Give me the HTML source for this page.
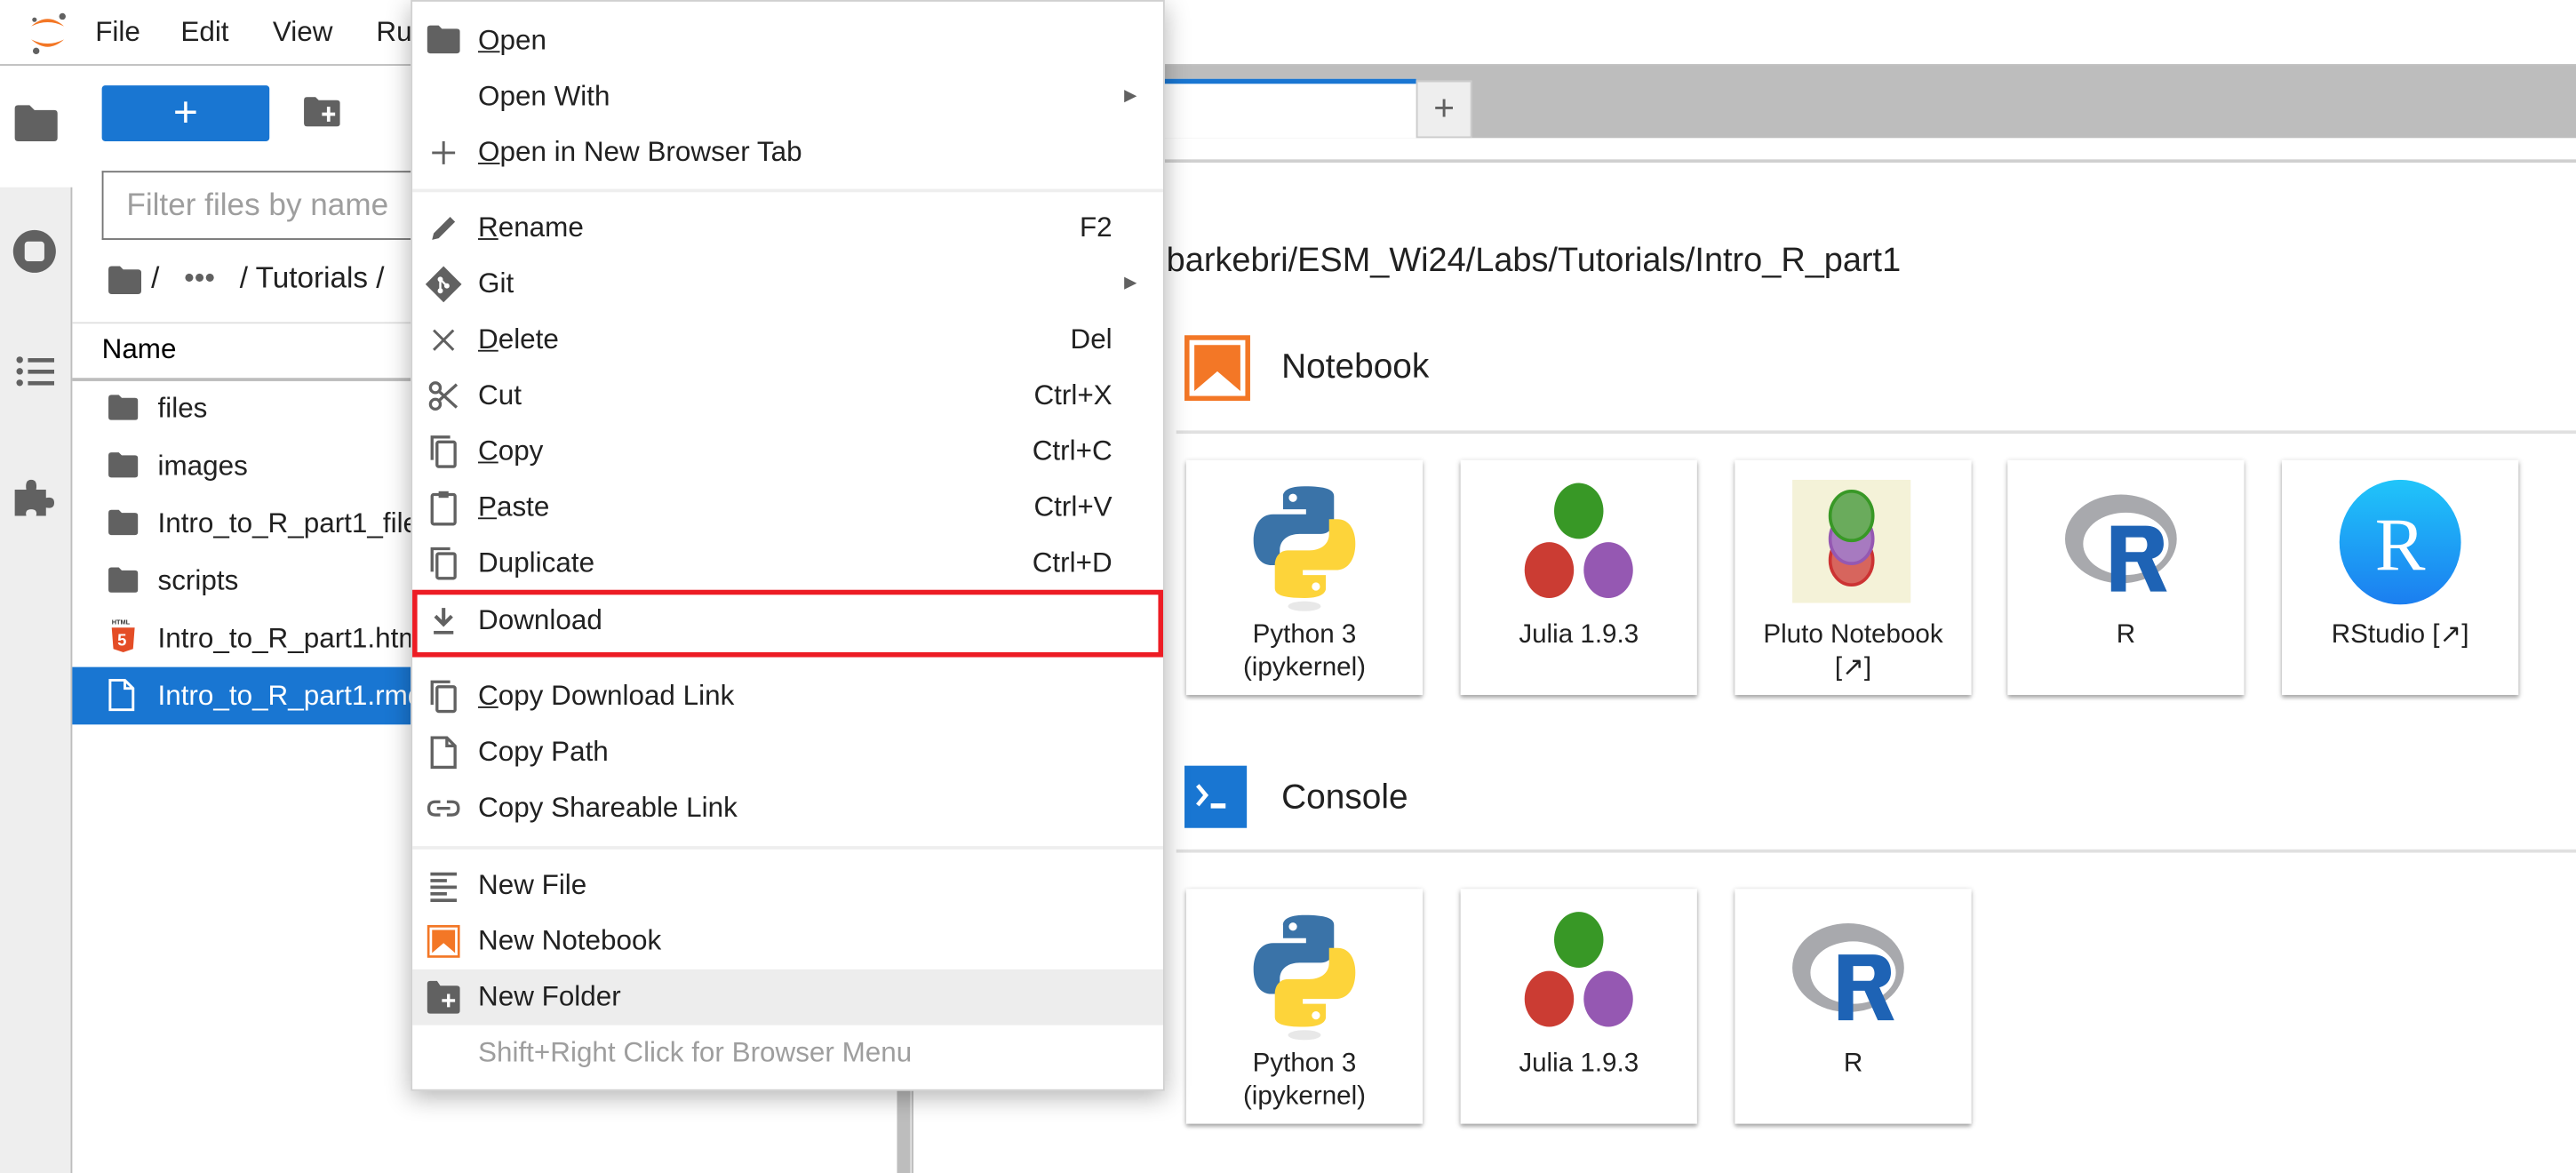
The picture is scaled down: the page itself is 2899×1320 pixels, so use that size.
<!DOCTYPE html>
<html><head><meta charset="utf-8">
<style>
*{margin:0;padding:0;box-sizing:border-box}
html,body{width:2899px;height:1319px;overflow:hidden;background:#fff}
#root{position:absolute;left:0;top:0;width:1568px;height:714px;transform:scale(1.84885);transform-origin:0 0;font-family:"Liberation Sans",sans-serif;color:#212121;font-size:17px}
.a{position:absolute}
.mi{position:absolute;left:250px;width:458px;height:34px;line-height:34px}
.mi .t{position:absolute;left:41px;top:0;white-space:nowrap}
.mi .k{position:absolute;right:31px;top:0}
.mi svg{position:absolute;left:10px;top:7px}
.fr{position:absolute;left:44px;width:510px;height:35px;line-height:35px;font-size:17px}
.fr .t{position:absolute;left:52px}
.fr svg{position:absolute;left:22px;top:9px}
.card{position:absolute;width:144px;height:143px;background:#fff;box-shadow:0 1px 3px rgba(0,0,0,.3),0 2px 2px rgba(0,0,0,.15);text-align:center;font-size:16px;line-height:20px}
.card .l{position:absolute;left:0;right:0;top:97px}
.card svg{position:absolute;left:34px;top:12px}
</style></head><body><div id="root">
<!-- top bar -->
<div class="a" style="left:0;top:0;width:1568px;height:40px;border-bottom:1px solid #bdbdbd;background:#fff"></div>
<svg class="a" style="left:14px;top:5px" width="30" height="30" viewBox="0 0 30 30"><path d="M5 11 Q15 2 25 11 Q15 6 5 11Z" fill="#f37726"/><path d="M5 19 Q15 28 25 19 Q15 24 5 19Z" fill="#f37726"/><circle cx="24" cy="5" r="2" fill="#616161"/><circle cx="7" cy="7" r="1.4" fill="#616161"/><circle cx="8" cy="26" r="2" fill="#616161"/></svg>
<div class="a" style="left:58px;top:10px;font-size:17px">File</div>
<div class="a" style="left:110px;top:10px;font-size:17px">Edit</div>
<div class="a" style="left:166px;top:10px;font-size:17px">View</div>
<div class="a" style="left:229px;top:10px;font-size:17px">Ru</div>
<!-- left sidebar -->
<div class="a" style="left:0;top:114px;width:44px;height:600px;background:#eeeeee;border-right:1px solid #bdbdbd"></div>
<svg class="a" style="left:8px;top:62px" width="28" height="26" viewBox="0 0 28 26"><path d="M1 4 Q1 2 3 2 L10 2 L13 5 L25 5 Q27 5 27 7 L27 22 Q27 24 25 24 L3 24 Q1 24 1 22Z" fill="#616161"/></svg>
<svg class="a" style="left:7px;top:139px" width="28" height="28" viewBox="0 0 28 28"><circle cx="14" cy="14" r="13" fill="#616161"/><rect x="8" y="8" width="12" height="12" rx="2" fill="#eee"/></svg>
<svg class="a" style="left:8px;top:214px" width="28" height="24" viewBox="0 0 28 24"><g fill="#616161"><circle cx="4" cy="5" r="2"/><circle cx="4" cy="12" r="2"/><circle cx="4" cy="19" r="2"/><rect x="9" y="4" width="16" height="2.5"/><rect x="9" y="11" width="16" height="2.5"/><rect x="9" y="18" width="16" height="2.5"/></g></svg>
<svg class="a" style="left:7px;top:290px" width="26" height="26" viewBox="0 0 26 26"><path d="M2 8 L9 8 Q8 2 12 2 Q16 2 15 8 L21 8 L21 13 Q26 12 26 16 Q26 20 21 19 L21 24 L15 24 Q16 20 12 20 Q8 20 9 24 L2 24Z" fill="#616161"/></svg>
<!-- file browser -->
<div class="a" style="left:62px;top:52px;width:102px;height:34px;background:#1976d2;border-radius:2px;color:#fff;text-align:center;font-size:26px;line-height:32px">+</div>
<svg class="a" style="left:185px;top:59px" width="22" height="18" viewBox="0 0 22 18"><path d="M0 2 Q0 0 2 0 L7 0 L9 2 L20 2 Q22 2 22 4 L22 16 Q22 18 20 18 L2 18 Q0 18 0 16Z" fill="#616161"/><path d="M15 6 V15 M11 10.5 H19" stroke="#fff" stroke-width="2"/></svg>
<div class="a" style="left:62px;top:104px;width:200px;height:42px;border:1px solid #757575;border-right:none;font-size:19px;color:#9e9e9e;padding:10px 0 0 14px;white-space:nowrap">Filter files by name</div>
<svg class="a" style="left:66px;top:162px" width="20" height="17" viewBox="0 0 20 17"><path d="M0 2 Q0 0 2 0 L7 0 L9 2 L18 2 Q20 2 20 4 L20 15 Q20 17 18 17 L2 17 Q0 17 0 15Z" fill="#616161"/></svg>
<div class="a" style="left:92px;top:159px;font-size:18px;white-space:nowrap">/ &nbsp; <span style="color:#616161">•••</span> &nbsp; / Tutorials / </div>
<div class="a" style="left:44px;top:196px;width:510px;height:1px;background:#e0e0e0"></div>
<div class="a" style="left:62px;top:203px;font-size:17px;color:#000">Name</div>
<div class="a" style="left:44px;top:230px;width:510px;height:2px;background:#bdbdbd"></div>
<div class="fr" style="top:231px"><svg width="18" height="16" viewBox="0 0 20 17"><path d="M0 2 Q0 0 2 0 L7 0 L9 2 L18 2 Q20 2 20 4 L20 15 Q20 17 18 17 L2 17 Q0 17 0 15Z" fill="#616161"/></svg><span class="t">files</span></div>
<div class="fr" style="top:266px"><svg width="18" height="16" viewBox="0 0 20 17"><path d="M0 2 Q0 0 2 0 L7 0 L9 2 L18 2 Q20 2 20 4 L20 15 Q20 17 18 17 L2 17 Q0 17 0 15Z" fill="#616161"/></svg><span class="t">images</span></div>
<div class="fr" style="top:301px"><svg width="18" height="16" viewBox="0 0 20 17"><path d="M0 2 Q0 0 2 0 L7 0 L9 2 L18 2 Q20 2 20 4 L20 15 Q20 17 18 17 L2 17 Q0 17 0 15Z" fill="#616161"/></svg><span class="t">Intro_to_R_part1_files</span></div>
<div class="fr" style="top:336px"><svg width="18" height="16" viewBox="0 0 20 17"><path d="M0 2 Q0 0 2 0 L7 0 L9 2 L18 2 Q20 2 20 4 L20 15 Q20 17 18 17 L2 17 Q0 17 0 15Z" fill="#616161"/></svg><span class="t">scripts</span></div>
<div class="fr" style="top:371px"><svg width="18" height="22" viewBox="0 0 18 22" style="top:5px"><text x="2" y="4" font-size="4" font-family="Liberation Sans" font-weight="bold" fill="#333">HTML</text><path d="M2 6 L16 6 L15 19 L9 21 L3 19Z" fill="#e44d26"/><text x="5.5" y="17" font-size="10" font-weight="bold" font-family="Liberation Sans" fill="#fff">5</text></svg><span class="t">Intro_to_R_part1.html</span></div>
<div class="fr" style="top:406px;background:#1976d2;color:#fff"><svg width="16" height="20" viewBox="0 0 16 20" style="top:7px"><path d="M1 1 H10 L15 6 V19 H1Z M10 1 V6 H15" fill="none" stroke="#fff" stroke-width="1.6"/></svg><span class="t">Intro_to_R_part1.rmd</span></div>
<div class="a" style="left:546px;top:663px;width:10px;height:51px;background:#bdbdbd"></div>
<!-- main area -->
<div class="a" style="left:554px;top:40px;width:1px;height:674px;background:#e0e0e0"></div>
<div class="a" style="left:555px;top:40px;width:1013px;height:44px;background:#bdbdbd"></div>
<div class="a" style="left:555px;top:48px;width:307px;height:36px;background:#fff;border-top:3px solid #1976d2"></div>
<div class="a" style="left:862px;top:49px;width:34px;height:35px;background:#eee;border:1px solid #ccc;text-align:center;font-size:22px;line-height:32px;color:#616161">+</div>
<div class="a" style="left:555px;top:97px;width:1013px;height:2px;background:#d0d0d0"></div>
<div class="a" style="left:710px;top:147px;font-size:20.5px;white-space:nowrap">barkebri/ESM_Wi24/Labs/Tutorials/Intro_R_part1</div>
<svg class="a" style="left:721px;top:204px" width="40" height="40" viewBox="0 0 40 40"><rect x="1.5" y="1.5" width="37" height="37" fill="#fff" stroke="#f37726" stroke-width="3"/><path d="M6 6 H34 V34 L20 22 L6 34Z" fill="#f37726"/></svg>
<div class="a" style="left:780px;top:212px;font-size:21px">Notebook</div>
<div class="a" style="left:716px;top:262px;width:852px;height:2px;background:#e0e0e0"></div>
<svg class="a" style="left:721px;top:466px" width="38" height="38" viewBox="0 0 38 38"><rect width="38" height="38" fill="#1976d2"/><path d="M8 12 L13 18 L8 24" fill="none" stroke="#fff" stroke-width="2.5"/><rect x="16" y="23" width="9" height="3" fill="#fff"/></svg>
<div class="a" style="left:780px;top:474px;font-size:21px">Console</div>
<div class="a" style="left:716px;top:517px;width:852px;height:2px;background:#e0e0e0"></div>

<!-- cards row 1 -->
<div class="card" style="left:722px;top:280px"><svg width="76" height="80" viewBox="0 0 76 80"><ellipse cx="38" cy="77" rx="10" ry="3" fill="#e8e8e8"/><path d="M38 4 C24 4 25 10 25 10 V18 H39 V21 H19 C11 21 7 28 7 37 C7 46 11 52 18 52 H23 V43 C23 36 29 33 35 33 H48 C53 33 56 29 56 24 V10 C56 6 51 4 38 4Z" fill="#3a73a8"/><circle cx="31" cy="11" r="2.5" fill="#fff"/><path d="M38 72 C52 72 51 66 51 66 V58 H37 V55 H57 C65 55 69 48 69 39 C69 30 65 24 58 24 H53 V33 C53 40 47 43 41 43 H28 C23 43 20 47 20 52 V66 C20 70 25 72 38 72Z" fill="#fdd43a"/><circle cx="45" cy="65" r="2.5" fill="#fff"/></svg><div class="l">Python 3<br>(ipykernel)</div></div>
<div class="card" style="left:889px;top:280px"><svg width="76" height="80" viewBox="0 0 76 80"><ellipse cx="38" cy="19" rx="15" ry="17" fill="#389826"/><ellipse cx="20" cy="55" rx="15" ry="17" fill="#cb3c33"/><ellipse cx="56" cy="55" rx="15" ry="17" fill="#9558b2"/></svg><div class="l">Julia 1.9.3</div></div>
<div class="card" style="left:1056px;top:280px"><svg width="76" height="76" viewBox="0 0 76 76"><rect x="1" y="0" width="72" height="75" fill="#f4f2d8"/><ellipse cx="37" cy="49" rx="13" ry="15" fill="#d7655d" stroke="#c33" stroke-width="2"/><ellipse cx="37" cy="36" rx="13" ry="15" fill="#a77ac0" stroke="#9558b2" stroke-width="2"/><ellipse cx="37" cy="22" rx="13" ry="15" fill="#6aab5c" stroke="#389826" stroke-width="2"/></svg><div class="l">Pluto Notebook<br>[↗]</div></div>
<div class="card" style="left:1222px;top:280px"><svg width="76" height="76" viewBox="0 0 76 76"><ellipse cx="35" cy="36" rx="34" ry="27" fill="#a8a9ad"/><ellipse cx="38" cy="39" rx="26" ry="19" fill="#fff"/><path d="M29 28 H50 C59 28 61 34 61 39 C61 44 58 47 54 48 L63 68 H53 L45 50 H38 V68 H29Z M38 35 V44 H48 C52 44 52 35 48 35Z" fill="#1e63b5"/></svg><div class="l">R</div></div>
<div class="card" style="left:1389px;top:280px"><svg width="76" height="76" viewBox="0 0 76 76"><defs><linearGradient id="g" x1="0" y1="0" x2="0" y2="1"><stop offset="0" stop-color="#20c5fa"/><stop offset="1" stop-color="#1b7ef0"/></linearGradient></defs><ellipse cx="38" cy="38" rx="37" ry="38" fill="url(#g)"/><text x="38" y="55" font-family="Liberation Serif" font-size="46" fill="#fff" text-anchor="middle">R</text></svg><div class="l">RStudio [↗]</div></div>
<!-- cards row 2 -->
<div class="card" style="left:722px;top:541px"><svg width="76" height="80" viewBox="0 0 76 80"><ellipse cx="38" cy="77" rx="10" ry="3" fill="#e8e8e8"/><path d="M38 4 C24 4 25 10 25 10 V18 H39 V21 H19 C11 21 7 28 7 37 C7 46 11 52 18 52 H23 V43 C23 36 29 33 35 33 H48 C53 33 56 29 56 24 V10 C56 6 51 4 38 4Z" fill="#3a73a8"/><circle cx="31" cy="11" r="2.5" fill="#fff"/><path d="M38 72 C52 72 51 66 51 66 V58 H37 V55 H57 C65 55 69 48 69 39 C69 30 65 24 58 24 H53 V33 C53 40 47 43 41 43 H28 C23 43 20 47 20 52 V66 C20 70 25 72 38 72Z" fill="#fdd43a"/><circle cx="45" cy="65" r="2.5" fill="#fff"/></svg><div class="l">Python 3<br>(ipykernel)</div></div>
<div class="card" style="left:889px;top:541px"><svg width="76" height="80" viewBox="0 0 76 80"><ellipse cx="38" cy="19" rx="15" ry="17" fill="#389826"/><ellipse cx="20" cy="55" rx="15" ry="17" fill="#cb3c33"/><ellipse cx="56" cy="55" rx="15" ry="17" fill="#9558b2"/></svg><div class="l">Julia 1.9.3</div></div>
<div class="card" style="left:1056px;top:541px"><svg width="76" height="76" viewBox="0 0 76 76"><ellipse cx="35" cy="36" rx="34" ry="27" fill="#a8a9ad"/><ellipse cx="38" cy="39" rx="26" ry="19" fill="#fff"/><path d="M29 28 H50 C59 28 61 34 61 39 C61 44 58 47 54 48 L63 68 H53 L45 50 H38 V68 H29Z M38 35 V44 H48 C52 44 52 35 48 35Z" fill="#1e63b5"/></svg><div class="l">R</div></div>

<!-- context menu -->
<div class="a" style="left:250px;top:0;width:459px;height:664px;background:#fff;border:1px solid #d0d0d0;box-shadow:0 4px 14px rgba(0,0,0,.3)"></div>
<div class="a" style="left:251px;top:115px;width:457px;height:2px;background:#eee"></div>
<div class="a" style="left:251px;top:515px;width:457px;height:2px;background:#eee"></div>
<div class="a" style="left:251px;top:590px;width:457px;height:34px;background:#ededed"></div>
<div class="a" style="left:251px;top:359px;width:457px;height:41px;border:3px solid #ed1c24"></div>

<div class="mi" style="top:8px"><svg width="20" height="18" viewBox="0 0 20 17"><path d="M0 2 Q0 0 2 0 L7 0 L9 2 L18 2 Q20 2 20 4 L20 15 Q20 17 18 17 L2 17 Q0 17 0 15Z" fill="#616161"/></svg><span class="t"><u>O</u>pen</span></div>
<div class="mi" style="top:42px"><span class="t">Open With</span><span class="k" style="right:16px;font-size:10px;color:#616161">▶</span></div>
<div class="mi" style="top:76px"><svg width="20" height="20" viewBox="0 0 20 20"><path d="M10 3 V17 M3 10 H17" stroke="#616161" stroke-width="1.6"/></svg><span class="t"><u>O</u>pen in New Browser Tab</span></div>
<div class="mi" style="top:122px"><svg width="20" height="20" viewBox="0 0 20 20"><path d="M3 17 L4 13 L14 3 L17 6 L7 16Z" fill="#616161"/></svg><span class="t"><u>R</u>ename</span><span class="k">F2</span></div>
<div class="mi" style="top:156px"><svg width="22" height="22" viewBox="0 0 22 22" style="left:9px;top:6px"><path d="M11 0 L22 11 L11 22 L0 11Z" fill="#616161"/><circle cx="9" cy="8" r="1.6" fill="#fff"/><circle cx="13" cy="12" r="1.6" fill="#fff"/><circle cx="9" cy="15" r="1.6" fill="#fff"/><path d="M9 8 V15 M9 8 L13 12" stroke="#fff" stroke-width="1.3"/></svg><span class="t">Git</span><span class="k" style="right:16px;font-size:10px;color:#616161">▶</span></div>
<div class="mi" style="top:190px"><svg width="20" height="20" viewBox="0 0 20 20"><path d="M4 4 L16 16 M16 4 L4 16" stroke="#616161" stroke-width="1.6"/></svg><span class="t"><u>D</u>elete</span><span class="k">Del</span></div>
<div class="mi" style="top:224px"><svg width="20" height="20" viewBox="0 0 20 20"><circle cx="5" cy="5" r="3" fill="none" stroke="#616161" stroke-width="1.8"/><circle cx="5" cy="15" r="3" fill="none" stroke="#616161" stroke-width="1.8"/><path d="M7 7 L18 17 M7 13 L18 3" stroke="#616161" stroke-width="1.8"/></svg><span class="t">Cut</span><span class="k">Ctrl+X</span></div>
<div class="mi" style="top:258px"><svg width="20" height="22" viewBox="0 0 20 22" style="top:6px"><path d="M3 16 V2 H14" fill="none" stroke="#616161" stroke-width="1.8"/><rect x="6" y="5" width="11" height="15" rx="1" fill="none" stroke="#616161" stroke-width="1.8"/></svg><span class="t"><u>C</u>opy</span><span class="k">Ctrl+C</span></div>
<div class="mi" style="top:292px"><svg width="20" height="22" viewBox="0 0 20 22" style="top:6px"><rect x="3" y="3" width="14" height="18" rx="1" fill="none" stroke="#616161" stroke-width="1.8"/><rect x="7" y="1" width="6" height="4" fill="#616161"/></svg><span class="t"><u>P</u>aste</span><span class="k">Ctrl+V</span></div>
<div class="mi" style="top:326px"><svg width="20" height="22" viewBox="0 0 20 22" style="top:6px"><path d="M3 16 V2 H14" fill="none" stroke="#616161" stroke-width="1.8"/><rect x="6" y="5" width="11" height="15" rx="1" fill="none" stroke="#616161" stroke-width="1.8"/></svg><span class="t">Duplicate</span><span class="k">Ctrl+D</span></div>
<div class="mi" style="top:361px"><svg width="20" height="20" viewBox="0 0 20 20"><path d="M10 2 V11 M5 7 L10 12 L15 7" fill="none" stroke="#616161" stroke-width="2.2"/><rect x="4" y="16" width="12" height="2" fill="#616161"/></svg><span class="t">Download</span></div>
<div class="mi" style="top:407px"><svg width="20" height="22" viewBox="0 0 20 22" style="top:6px"><path d="M3 16 V2 H14" fill="none" stroke="#616161" stroke-width="1.8"/><rect x="6" y="5" width="11" height="15" rx="1" fill="none" stroke="#616161" stroke-width="1.8"/></svg><span class="t"><u>C</u>opy Download Link</span></div>
<div class="mi" style="top:441px"><svg width="20" height="22" viewBox="0 0 20 22" style="top:6px"><path d="M3 2 H12 L17 7 V20 H3Z M12 2 V7 H17" fill="none" stroke="#616161" stroke-width="1.8"/></svg><span class="t">Copy Path</span></div>
<div class="mi" style="top:475px"><svg width="20" height="20" viewBox="0 0 20 20"><path d="M8 6 H5 Q1 6 1 10 Q1 14 5 14 H8 M12 6 H15 Q19 6 19 10 Q19 14 15 14 H12 M6 10 H14" fill="none" stroke="#616161" stroke-width="1.8"/></svg><span class="t">Copy Shareable Link</span></div>
<div class="mi" style="top:522px"><svg width="20" height="20" viewBox="0 0 20 20"><g fill="#616161"><rect x="2" y="2" width="16" height="2"/><rect x="2" y="6" width="10" height="2"/><rect x="2" y="10" width="16" height="2"/><rect x="2" y="14" width="10" height="2"/><rect x="2" y="18" width="16" height="2"/></g></svg><span class="t">New File</span></div>
<div class="mi" style="top:556px"><svg width="20" height="20" viewBox="0 0 40 40"><rect x="1.5" y="1.5" width="37" height="37" fill="#fff" stroke="#f37726" stroke-width="3"/><path d="M6 6 H34 V34 L20 22 L6 34Z" fill="#f37726"/></svg><span class="t">New Notebook</span></div>
<div class="mi" style="top:590px"><svg width="20" height="20" viewBox="0 0 20 20"><path d="M0 2 Q0 0 2 0 L6 0 L8 3 L18 3 Q20 3 20 5 L20 18 Q20 20 18 20 L2 20 Q0 20 0 18Z" fill="#616161"/><path d="M13 8 V16 M9 12 H17" stroke="#fff" stroke-width="1.8"/></svg><span class="t">New Folder</span></div>
<div class="mi" style="top:624px;color:#9e9e9e"><span class="t">Shift+Right Click for Browser Menu</span></div>
</div></body></html>
